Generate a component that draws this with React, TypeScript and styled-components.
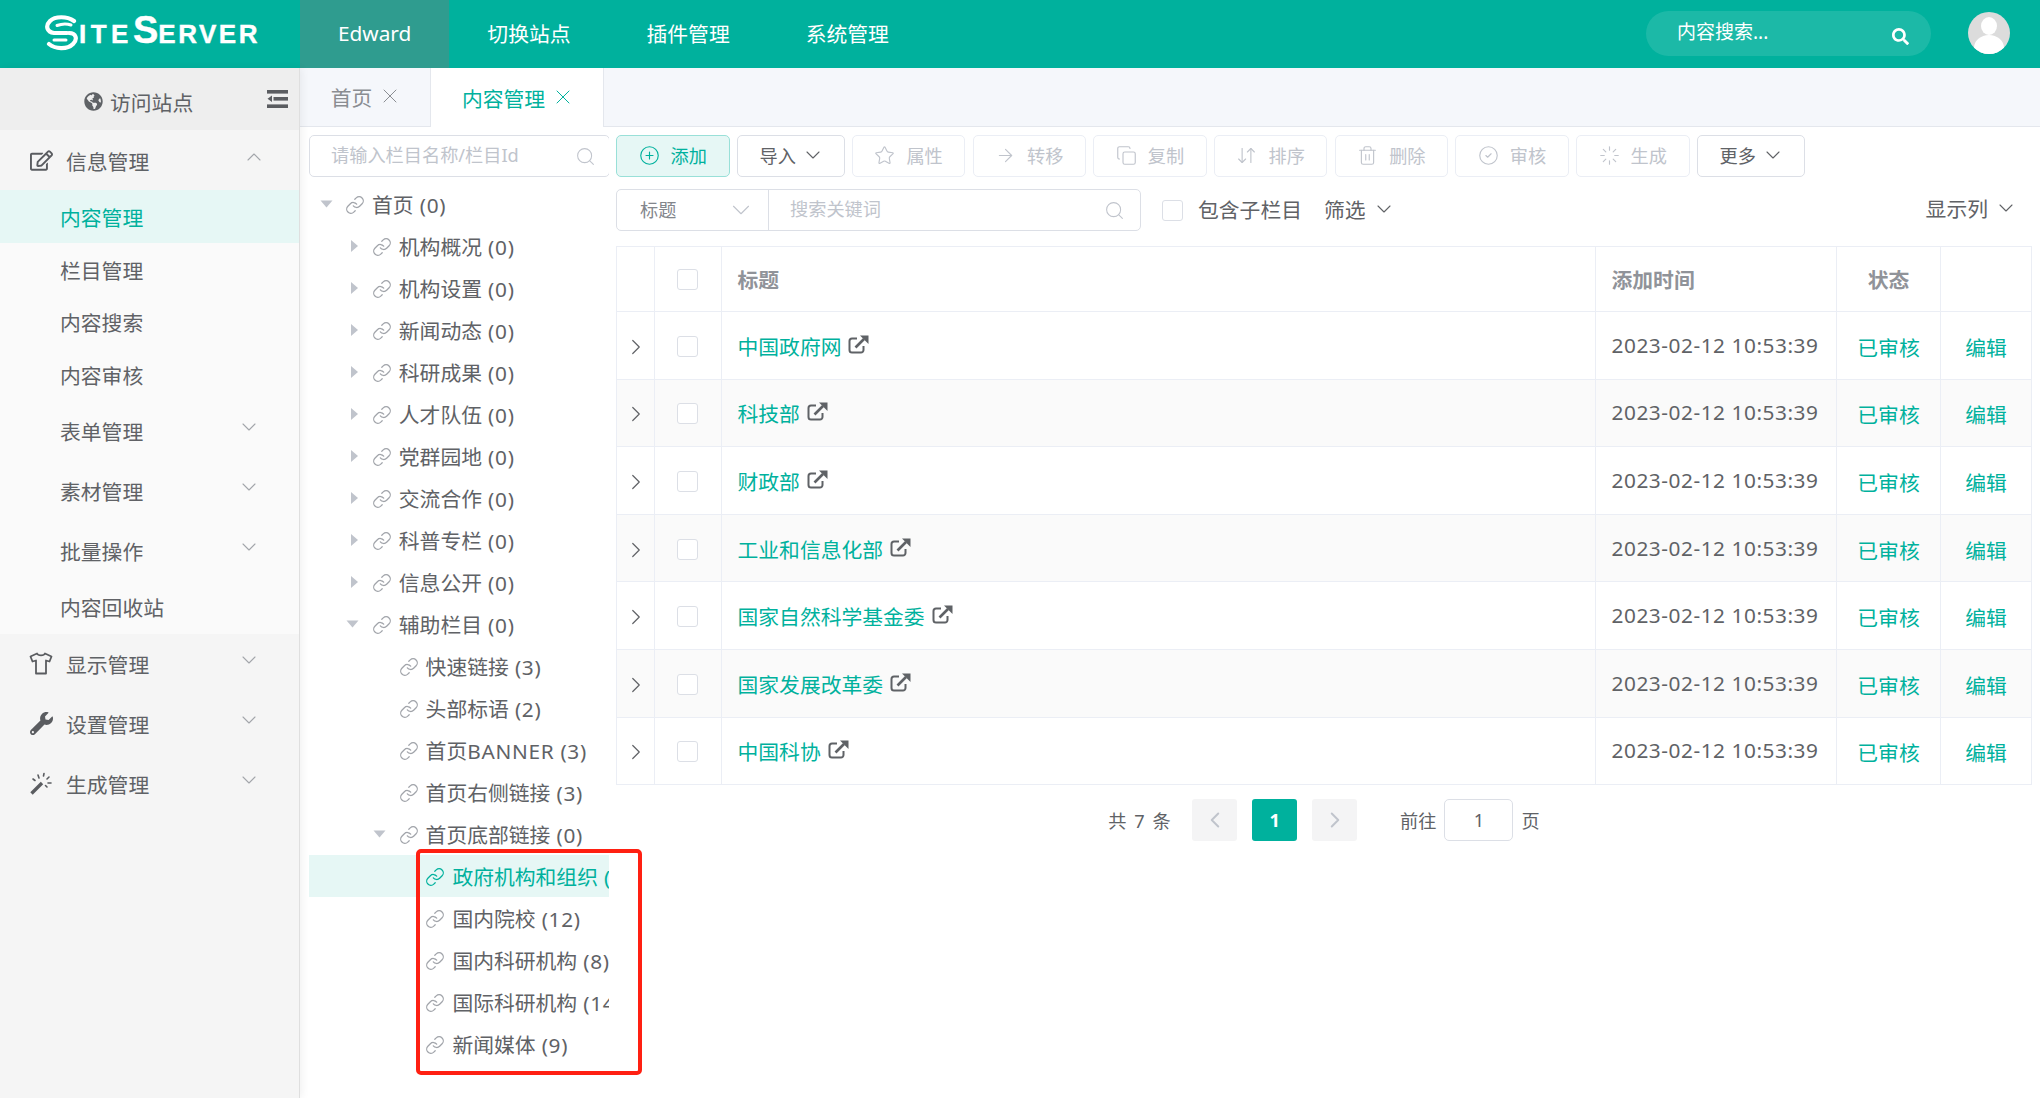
import React from "react";
import styled, { createGlobalStyle } from "styled-components";
import {
  ArrowDownUp,
  ArrowRight,
  ChevronDown,
  ChevronLeft,
  ChevronRight,
  ChevronUp,
  CircleCheck,
  CirclePlus,
  Copy,
  Link,
  Loader,
  Search,
  Star,
  Trash2,
  X,
} from "lucide-react";
import { FaGlobeAmericas, FaRegEdit, FaSearch, FaWrench } from "react-icons/fa";

const teal = "#00b19d";
const text = "#606266";
const muted = "#c0c4cc";
const line = "#ebeef5";

const GlobalStyle = createGlobalStyle`
  html, body {
    margin: 0;
    padding: 0;
    background: #fff;
  }
  body {
    font-family: "Noto Sans", "Noto Sans CJK SC", sans-serif;
    color: ${text};
    font-size: 20.8px;
  }
  * {
    box-sizing: border-box;
  }
  input {
    font-family: inherit;
    outline: none;
  }
`;

const Shell = styled.div`
  position: relative;
  width: 2040px;
  height: 1098px;
  overflow: hidden;
  display: flex;
  flex-direction: column;
`;

const Header = styled.header`
  height: 68px;
  flex: none;
  display: flex;
  align-items: stretch;
  background: ${teal};
  color: #fff;
  padding-right: 30px;
`;

const Logo = styled.div`
  width: 300px;
  flex: none;
  display: flex;
  align-items: flex-start;
  padding: 15px 0 0 45px;
`;

const LogoText = styled.div`
  margin-left: 1px;
  height: 34px;
  display: flex;
  align-items: baseline;
  font-family: "Liberation Sans", sans-serif;
  font-weight: 700;
  font-size: 26px;
  line-height: 31px;
  letter-spacing: 2.5px;
  -webkit-text-stroke: 0.4px #fff;

  i {
    font-style: normal;
    letter-spacing: 4.5px;
  }
  b {
    font-size: 38px;
    letter-spacing: 0;
  }
`;

const NavItem = styled.div<{ $active?: boolean }>`
  display: flex;
  align-items: center;
  padding: 0 38px 2px;
  font-size: 20.8px;
  background: ${(p) => (p.$active ? "#2f9c8f" : "transparent")};
`;

const HeaderSearch = styled.div`
  margin-left: auto;
  margin-top: 11px;
  width: 285px;
  height: 45px;
  border-radius: 23px;
  background: rgba(255, 255, 255, 0.11);
  display: flex;
  align-items: center;
  padding: 0 22px 0 31px;

  input {
    flex: 1;
    min-width: 0;
    background: none;
    border: none;
    font-size: 19px;
    color: #fff;
    padding: 0 0 4px;
  }
  input::placeholder {
    color: #fff;
    opacity: 1;
  }
  svg {
    margin-top: 5px;
  }
`;

const Avatar = styled.div`
  margin: 12px 0 0 37px;
  width: 42px;
  height: 42px;
  border-radius: 50%;
  overflow: hidden;
  background: #dcdcdc;
`;

const Body = styled.div`
  flex: 1;
  min-height: 0;
  display: flex;
`;

const Sidebar = styled.aside`
  position: relative;
  z-index: 1;
  width: 300px;
  flex: none;
  background: #f5f5f5;
  border-right: 1px solid #dfdfdf;
  box-shadow: 2px 0 8px rgba(0, 0, 0, 0.06);
`;

const VisitRow = styled.div`
  height: 62px;
  background: #eeeeee;
  display: flex;
  align-items: center;
  padding: 5px 11px 0 84px;
  color: #5f6266;

  span {
    margin-left: 7px;
  }
  svg:last-child {
    margin-left: auto;
    margin-top: -5px;
  }
`;

const GroupRow = styled.div<{ $open?: boolean }>`
  height: 60px;
  display: flex;
  align-items: center;
  padding: ${(p) => (p.$open ? 1 : 0)}px ${(p) => (p.$open ? 33.5 : 38)}px 0 29px;
  color: #5f6266;

  > svg:last-child {
    margin-left: auto;
    margin-top: -8px;
    color: #a3a6ab;
  }
`;

const GroupIcon = styled.span`
  width: 24px;
  height: 24px;
  margin-right: 13px;
  display: flex;
  align-items: center;
  justify-content: center;
  color: #5a5c60;
`;

const SubList = styled.div`
  background: #fafafa;
  padding-bottom: 1px;
`;

const SubItem = styled.div<{ $active?: boolean; $tall?: boolean }>`
  height: ${(p) => (p.$tall ? 60 : 52.5)}px;
  display: flex;
  align-items: center;
  padding: 1.5px 38px 0 60px;
  background: ${(p) => (p.$active ? "#e6f7f5" : "transparent")};
  color: ${(p) => (p.$active ? teal : text)};

  svg {
    margin-left: auto;
    margin-top: -8px;
    color: #a3a6ab;
  }
`;

const Main = styled.main`
  flex: 1;
  min-width: 0;
  display: flex;
  flex-direction: column;
`;

const Tabs = styled.div`
  height: 59px;
  flex: none;
  display: flex;
  background: #f5f7fb;
  border-bottom: 1px solid #e4e7ed;
`;

const Tab = styled.div<{ $active?: boolean }>`
  width: ${(p) => (p.$active ? 173 : 131)}px;
  height: ${(p) => (p.$active ? 59 : 58)}px;
  display: flex;
  align-items: center;
  justify-content: center;
  gap: 6px;
  padding-left: 3px;
  background: ${(p) => (p.$active ? "#fff" : "transparent")};
  border-right: 1px solid #e4e7ed;
  color: ${(p) => (p.$active ? teal : "#8a8d92")};

  svg {
    margin-top: -2px;
  }
`;

const Panel = styled.div`
  flex: 1;
  min-height: 0;
  display: flex;
  padding: 8px 8px 0 9px;
  gap: 7px;
`;

const TreeColumn = styled.div`
  width: 300px;
  flex: none;
  overflow: hidden;
`;

const TextBox = styled.div`
  height: 42px;
  border: 1px solid #dcdfe6;
  border-radius: 5px;
  display: flex;
  align-items: center;
  background: #fff;

  input {
    flex: 1;
    min-width: 0;
    border: none;
    background: none;
    font-size: 18.2px;
    color: ${text};
    padding: 0 0 3px;
  }
  input::placeholder {
    color: ${muted};
    opacity: 1;
  }
  svg {
    flex: none;
    color: ${muted};
  }
`;

const TreeSearch = styled(TextBox)`
  width: 301px;
  padding: 0 13px 0 21px;
`;

const TreeList = styled.div`
  margin-top: 6px;
`;

const TreeRow = styled.div<{ $level: number; $active?: boolean }>`
  height: 42px;
  display: flex;
  align-items: center;
  white-space: pre;
  overflow: hidden;
  padding-left: ${(p) => p.$level * 26.8}px;
  background: ${(p) => (p.$active ? "#e6f7f5" : "transparent")};
  color: ${(p) => (p.$active ? teal : text)};

  > svg {
    flex: none;
    margin: 1px 7px 0 2px;
    color: ${(p) => (p.$active ? teal : "#a1a4aa")};
  }
`;

const Caret = styled.span<{ $state: "open" | "closed" | "none" }>`
  width: 34px;
  flex: none;
  display: flex;
  align-items: center;
  justify-content: center;

  &::before {
    content: "";
    display: ${(p) => (p.$state === "none" ? "none" : "block")};
    margin-left: ${(p) => (p.$state === "closed" ? 3 : 0)}px;
    border-style: solid;
    border-color: transparent;
    border-width: 6.5px 0 6.5px 7.5px;
    border-left-color: #c0c4cc;
    transform: rotate(${(p) => (p.$state === "open" ? 90 : 0)}deg);
  }
`;

const Latin = styled.span`
  letter-spacing: 0.7px;
`;

const Content = styled.div`
  flex: 1;
  min-width: 0;
`;

const Toolbar = styled.div`
  display: flex;
  gap: 7.2px;
`;

const ToolButton = styled.div<{ $kind: "primary" | "plain" | "disabled" }>`
  width: ${(p) => (p.$kind === "plain" ? 108 : 113.5)}px;
  height: 42px;
  display: flex;
  align-items: center;
  justify-content: center;
  gap: ${(p) => (p.$kind === "plain" ? 5 : 11)}px;
  padding: 0 0 2px ${(p) => (p.$kind === "plain" ? 3 : 0)}px;
  font-size: 18.2px;
  border-radius: 5px;
  border: 1px solid
    ${(p) => (p.$kind === "primary" ? "#99e0d8" : p.$kind === "plain" ? "#dcdfe6" : line)};
  background: ${(p) => (p.$kind === "primary" ? "#e6f7f5" : "#fff")};
  color: ${(p) => (p.$kind === "primary" ? teal : p.$kind === "plain" ? text : muted)};
`;

const FilterRow = styled.div`
  margin-top: 12px;
  height: 42px;
  display: flex;
  align-items: center;
`;

const KeywordBox = styled(TextBox)`
  width: 525px;
`;

const FieldSelect = styled.div`
  width: 152px;
  height: 100%;
  flex: none;
  display: flex;
  align-items: center;
  font-size: 18.2px;
  padding: 0 12px 3px 23px;
  border-right: 1px solid #dcdfe6;
  color: #83868c;

  svg {
    margin-left: auto;
    margin-top: 3px;
  }
`;

const KeywordInput = styled.div`
  flex: 1;
  min-width: 0;
  display: flex;
  align-items: center;
  padding: 0 15px 0 21px;
`;

const CheckBox = styled.span`
  width: 21px;
  height: 21px;
  flex: none;
  display: block;
  border: 1px solid #dcdfe6;
  border-radius: 3px;
  background: #fff;
`;

const RowCheck = styled(CheckBox)<{ $body?: boolean }>`
  margin: ${(p) => (p.$body ? 2 : 0)}px 2px 0 0;
`;

const CheckLabel = styled.label`
  display: flex;
  align-items: center;
  margin-left: 21px;
  gap: 15px;
  padding-bottom: 2px;

  span {
    margin-top: 2px;
  }
`;

const Dropdown = styled.div<{ $end?: boolean }>`
  display: flex;
  align-items: center;
  gap: 6px;
  margin: ${(p) => (p.$end ? "-5px 14px 0 auto" : "-2px 0 0 22px")};

  svg {
    color: ${text};
  }
`;

const DataTable = styled.div`
  margin-top: 15px;
  border: solid ${line};
  border-width: 1px 1px 0 1px;
`;

const TableRow = styled.div<{ $head?: boolean; $stripe?: boolean }>`
  height: ${(p) => (p.$head ? 65 : 67.6)}px;
  display: grid;
  grid-template-columns: 38px 67px 874px 241px 104px 1fr;
  border-bottom: 1px solid ${line};
  background: ${(p) => (p.$stripe ? "#fafafa" : "#fff")};
  color: ${(p) => (p.$head ? "#909399" : text)};
  font-weight: ${(p) => (p.$head ? 700 : 400)};
`;

const Cell = styled.div<{ $center?: boolean; $last?: boolean }>`
  display: flex;
  align-items: center;
  justify-content: ${(p) => (p.$center ? "center" : "flex-start")};
  padding: 0 ${(p) => (p.$center ? 0 : 15.5)}px;
  border-right: ${(p) => (p.$last ? "none" : `1px solid ${line}`)};
  white-space: nowrap;
`;

const ExpandIcon = styled(ChevronRight)`
  margin: 3px 0 0 1px;
`;

const TealLink = styled.span`
  color: ${teal};
  padding-top: 3px;
`;

const TitleLink = styled.span`
  display: flex;
  align-items: center;
  gap: 7px;
  color: ${teal};
  padding-top: 1px;

  svg {
    color: #5f6266;
    margin-top: -3px;
  }
`;

const TimeText = styled.span`
  padding-bottom: 1px;
  letter-spacing: 0.55px;
`;

const Pager = styled.div`
  margin-top: 14px;
  display: flex;
  justify-content: center;
  align-items: center;
  font-size: 18.2px;
`;

const PageCount = styled.span`
  margin-right: 20px;
  letter-spacing: 1.5px;
`;

const PageButton = styled.div<{ $active?: boolean }>`
  width: 45px;
  height: 42px;
  margin-right: 15px;
  border-radius: 3px;
  display: flex;
  align-items: center;
  justify-content: center;
  font-weight: 700;
  background: ${(p) => (p.$active ? teal : "#f4f4f5")};
  color: ${(p) => (p.$active ? "#fff" : muted)};
`;

const JumpLabel = styled.span`
  margin-left: 28px;
`;

const JumpInput = styled.input`
  width: 69px;
  height: 42px;
  margin: 0 8px 0 8px;
  border: 1px solid #dcdfe6;
  border-radius: 5px;
  text-align: center;
  font-size: 18.2px;
  color: ${text};
`;

const Highlight = styled.div`
  position: absolute;
  left: 416px;
  top: 849px;
  width: 226px;
  height: 226px;
  border: 4.5px solid #ff2012;
  border-radius: 5px;
  pointer-events: none;
`;

const SwirlLogo = () => (
  <svg width="33" height="36" viewBox="0 0 33 36" fill="none" stroke="#fff" strokeLinecap="round">
    <path d="M29 6 C22 1 10 1 5 6 C0 11 2 17 9 18 L22 18" strokeWidth="4.2" />
    <path d="M12 10.5 C17 8.5 22 8.5 26 10" strokeWidth="3" />
    <path d="M4 29 C10 34 22 35 28 29 C33 24 31 18 24 18" strokeWidth="4.2" />
    <path d="M9 25 L21 25" strokeWidth="3" />
  </svg>
);

const UserIcon = () => (
  <svg width="42" height="42" viewBox="0 0 42 42">
    <ellipse cx="21" cy="14" rx="8" ry="9" fill="#fff" />
    <ellipse cx="21" cy="36" rx="15" ry="13" fill="#fff" />
  </svg>
);

const CollapseIcon = () => (
  <svg width="21" height="18" viewBox="0 0 21 18" fill="#5a5c60">
    <rect x="0" y="0" width="21" height="3.6" />
    <rect x="6.5" y="7" width="14.5" height="3.6" />
    <rect x="0" y="14.4" width="21" height="3.6" />
    <path d="M5 5.6 V12 L0.5 8.8 Z" />
  </svg>
);

const ShirtIcon = () => (
  <svg width="24" height="23" viewBox="0 0 24 23" fill="none" stroke="currentColor" strokeWidth="1.8" strokeLinejoin="round">
    <path d="M8 1.5 L1.5 4.5 L3.5 9.5 L7 8.5 V21.5 H17 V8.5 L20.5 9.5 L22.5 4.5 L16 1.5 C15 4 9 4 8 1.5 Z" />
  </svg>
);

const WandIcon = () => (
  <svg width="24" height="24" viewBox="0 0 24 24" fill="none" stroke="currentColor" strokeLinecap="round">
    <path d="M2.5 21.5 L13 11" strokeWidth="3.4" strokeLinecap="butt" />
    <path d="M9 3 L10 6 M15 1.5 L14.5 4 M20 5 L18 7 M22 11 L19 11 M18 15 L16.5 13.5 M4 7 L6 8.5" strokeWidth="1.6" />
  </svg>
);

const ExternalIcon = () => (
  <svg width="21" height="19" viewBox="0 0 21 19" fill="none" stroke="currentColor">
    <path d="M9 3.5 H4 a2.5 2.5 0 0 0 -2.5 2.5 V15 a2.5 2.5 0 0 0 2.5 2.5 H13 a2.5 2.5 0 0 0 2.5 -2.5 V11" strokeWidth="2" />
    <path d="M7.5 12.5 L16 4" strokeWidth="2.6" />
    <path d="M12 0.5 H20.5 V9 Z" fill="currentColor" stroke="none" />
  </svg>
);

const tree: { label: string; level: number; caret: "open" | "closed" | "none"; active?: boolean }[] = [
  { label: "首页 (0)", level: 0, caret: "open" },
  { label: "机构概况 (0)", level: 1, caret: "closed" },
  { label: "机构设置 (0)", level: 1, caret: "closed" },
  { label: "新闻动态 (0)", level: 1, caret: "closed" },
  { label: "科研成果 (0)", level: 1, caret: "closed" },
  { label: "人才队伍 (0)", level: 1, caret: "closed" },
  { label: "党群园地 (0)", level: 1, caret: "closed" },
  { label: "交流合作 (0)", level: 1, caret: "closed" },
  { label: "科普专栏 (0)", level: 1, caret: "closed" },
  { label: "信息公开 (0)", level: 1, caret: "closed" },
  { label: "辅助栏目 (0)", level: 1, caret: "open" },
  { label: "快速链接 (3)", level: 2, caret: "none" },
  { label: "头部标语 (2)", level: 2, caret: "none" },
  { label: "首页BANNER (3)", level: 2, caret: "none" },
  { label: "首页右侧链接 (3)", level: 2, caret: "none" },
  { label: "首页底部链接 (0)", level: 2, caret: "open" },
  { label: "政府机构和组织 (11)", level: 3, caret: "none", active: true },
  { label: "国内院校 (12)", level: 3, caret: "none" },
  { label: "国内科研机构 (8)", level: 3, caret: "none" },
  { label: "国际科研机构 (14)", level: 3, caret: "none" },
  { label: "新闻媒体 (9)", level: 3, caret: "none" },
];

const actions = [
  { label: "属性", icon: <Star size={21} strokeWidth={1.3} /> },
  { label: "转移", icon: <ArrowRight size={21} strokeWidth={1.3} /> },
  { label: "复制", icon: <Copy size={21} strokeWidth={1.3} /> },
  { label: "排序", icon: <ArrowDownUp size={21} strokeWidth={1.3} /> },
  { label: "删除", icon: <Trash2 size={21} strokeWidth={1.3} /> },
  { label: "审核", icon: <CircleCheck size={21} strokeWidth={1.3} /> },
  { label: "生成", icon: <Loader size={21} strokeWidth={1.3} /> },
];

const sites = ["中国政府网", "科技部", "财政部", "工业和信息化部", "国家自然科学基金委", "国家发展改革委", "中国科协"];

const thinDown = <ChevronDown size={24} strokeWidth={1.1} />;

// ascii runs are a little wider in the original font
const treeLabel = (label: string) =>
  label.split(/([\x20-\x7e]+)/).map((part, i) => (i % 2 ? <Latin key={i}>{part}</Latin> : part));

export default function App() {
  return (
    <Shell>
      <GlobalStyle />
      <Header>
        <Logo>
          <SwirlLogo />
          <LogoText>
            <i>ITE</i>
            <b>S</b>ERVER
          </LogoText>
        </Logo>
        <NavItem $active>Edward</NavItem>
        <NavItem>切换站点</NavItem>
        <NavItem>插件管理</NavItem>
        <NavItem>系统管理</NavItem>
        <HeaderSearch>
          <input placeholder="内容搜索..." />
          <FaSearch size={17} />
        </HeaderSearch>
        <Avatar>
          <UserIcon />
        </Avatar>
      </Header>
      <Body>
        <Sidebar>
          <VisitRow>
            <FaGlobeAmericas size={19} />
            <span>访问站点</span>
            <CollapseIcon />
          </VisitRow>
          <GroupRow $open>
            <GroupIcon>
              <FaRegEdit size={23} />
            </GroupIcon>
            信息管理
            <ChevronUp size={24} strokeWidth={1.1} />
          </GroupRow>
          <SubList>
            <SubItem $active>内容管理</SubItem>
            <SubItem>栏目管理</SubItem>
            <SubItem>内容搜索</SubItem>
            <SubItem>内容审核</SubItem>
            <SubItem $tall>表单管理{thinDown}</SubItem>
            <SubItem $tall>素材管理{thinDown}</SubItem>
            <SubItem $tall>批量操作{thinDown}</SubItem>
            <SubItem>内容回收站</SubItem>
          </SubList>
          <GroupRow>
            <GroupIcon>
              <ShirtIcon />
            </GroupIcon>
            显示管理
            {thinDown}
          </GroupRow>
          <GroupRow>
            <GroupIcon>
              <FaWrench size={23} />
            </GroupIcon>
            设置管理
            {thinDown}
          </GroupRow>
          <GroupRow>
            <GroupIcon>
              <WandIcon />
            </GroupIcon>
            生成管理
            {thinDown}
          </GroupRow>
        </Sidebar>
        <Main>
          <Tabs>
            <Tab>
              首页
              <X size={24} strokeWidth={1} />
            </Tab>
            <Tab $active>
              内容管理
              <X size={24} strokeWidth={1} />
            </Tab>
          </Tabs>
          <Panel>
            <TreeColumn>
              <TreeSearch>
                <input placeholder="请输入栏目名称/栏目Id" />
                <Search size={21} strokeWidth={1.2} />
              </TreeSearch>
              <TreeList>
                {tree.map((node) => (
                  <TreeRow key={node.label} $level={node.level} $active={node.active}>
                    <Caret $state={node.caret} />
                    <Link size={20} strokeWidth={1.5} />
                    <span>{treeLabel(node.label)}</span>
                  </TreeRow>
                ))}
              </TreeList>
            </TreeColumn>
            <Content>
              <Toolbar>
                <ToolButton $kind="primary">
                  <CirclePlus size={21} strokeWidth={1.3} />
                  添加
                </ToolButton>
                <ToolButton $kind="plain">导入{thinDown}</ToolButton>
                {actions.map((action) => (
                  <ToolButton key={action.label} $kind="disabled">
                    {action.icon}
                    {action.label}
                  </ToolButton>
                ))}
                <ToolButton $kind="plain">更多{thinDown}</ToolButton>
              </Toolbar>
              <FilterRow>
                <KeywordBox>
                  <FieldSelect>
                    标题
                    <ChevronDown size={30} strokeWidth={0.9} />
                  </FieldSelect>
                  <KeywordInput>
                    <input placeholder="搜索关键词" />
                    <Search size={21} strokeWidth={1.2} />
                  </KeywordInput>
                </KeywordBox>
                <CheckLabel>
                  <CheckBox />
                  包含子栏目
                </CheckLabel>
                <Dropdown>筛选{thinDown}</Dropdown>
                <Dropdown $end>显示列{thinDown}</Dropdown>
              </FilterRow>
              <DataTable>
                <TableRow $head>
                  <Cell />
                  <Cell $center>
                    <RowCheck />
                  </Cell>
                  <Cell>标题</Cell>
                  <Cell>添加时间</Cell>
                  <Cell $center>状态</Cell>
                  <Cell $last />
                </TableRow>
                {sites.map((site, i) => (
                  <TableRow key={site} $stripe={i % 2 === 1}>
                    <Cell $center>
                      <ExpandIcon size={26} strokeWidth={1.1} />
                    </Cell>
                    <Cell $center>
                      <RowCheck $body />
                    </Cell>
                    <Cell>
                      <TitleLink>
                        {site}
                        <ExternalIcon />
                      </TitleLink>
                    </Cell>
                    <Cell>
                      <TimeText>2023-02-12 10:53:39</TimeText>
                    </Cell>
                    <Cell $center>
                      <TealLink>已审核</TealLink>
                    </Cell>
                    <Cell $center $last>
                      <TealLink>编辑</TealLink>
                    </Cell>
                  </TableRow>
                ))}
              </DataTable>
              <Pager>
                <PageCount>共 7 条</PageCount>
                <PageButton>
                  <ChevronLeft size={26} strokeWidth={1.8} />
                </PageButton>
                <PageButton $active>1</PageButton>
                <PageButton>
                  <ChevronRight size={26} strokeWidth={1.8} />
                </PageButton>
                <JumpLabel>前往</JumpLabel>
                <JumpInput defaultValue="1" />
                <span>页</span>
              </Pager>
            </Content>
          </Panel>
        </Main>
      </Body>
      <Highlight />
    </Shell>
  );
}
